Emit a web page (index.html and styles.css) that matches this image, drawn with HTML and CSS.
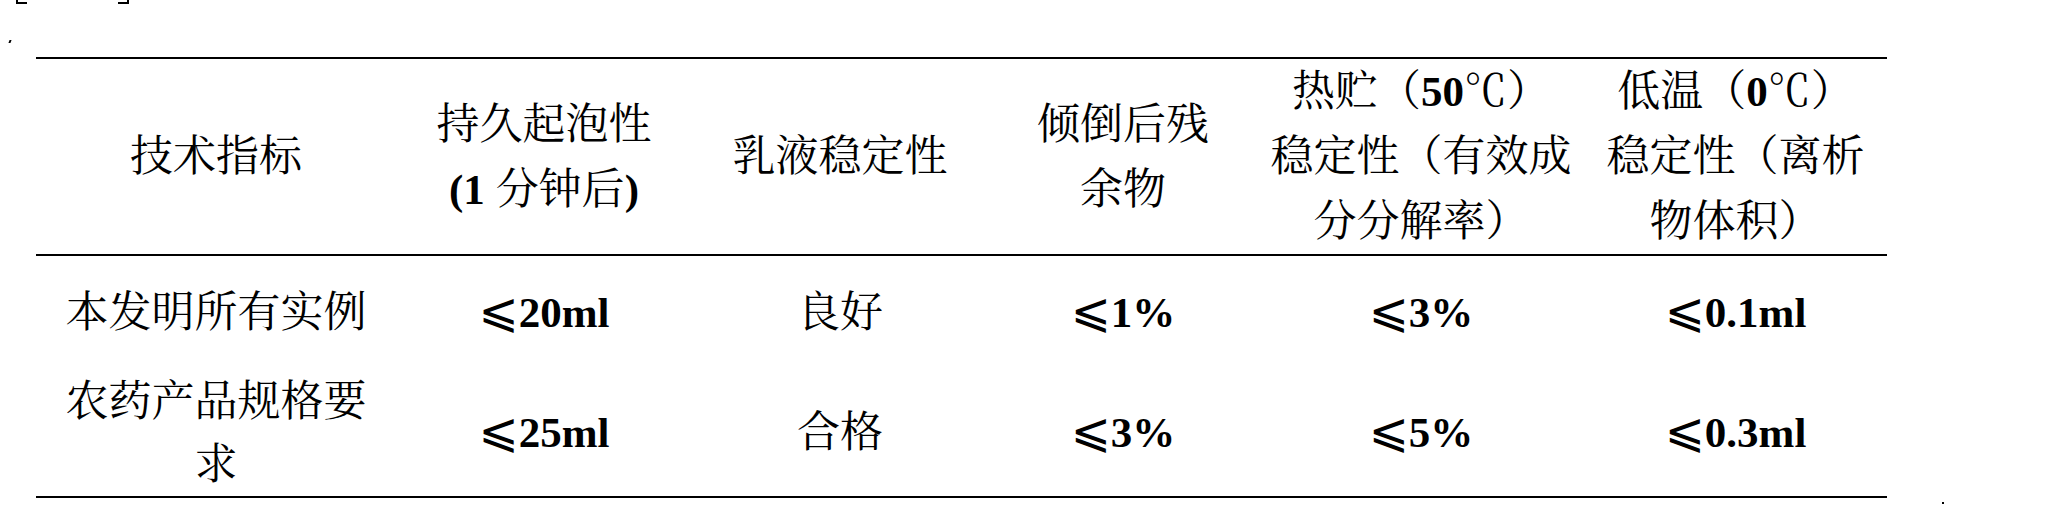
FILE: index.html
```html
<!DOCTYPE html>
<html lang="zh-CN">
<head>
<meta charset="utf-8">
<title>技术指标</title>
<link rel="stylesheet" href="styles.css">
</head>
<body>
<div class="page">
  <div class="marks">
    <span class="mark bracket-left"></span>
    <span class="mark bracket-right"></span>
    <span class="mark tick"></span>
    <span class="mark dot"></span>
  </div>
  <table class="spec">
    <colgroup>
      <col class="c1"><col class="c2"><col class="c3"><col class="c4"><col class="c5"><col class="c6">
    </colgroup>
    <thead>
      <tr class="head-row">
        <th>技术指标</th>
        <th>持久起泡性<br><b class="num">(1 </b>分钟后<b class="num">)</b></th>
        <th>乳液稳定性</th>
        <th>倾倒后残<br>余物</th>
        <th>热贮（<b class="num">50</b>℃）<br>稳定性（有效成<br>分分解率）</th>
        <th>低温（<b class="num">0</b>℃）<br>稳定性（离析<br>物体积）</th>
      </tr>
    </thead>
    <tbody>
      <tr class="row-one">
        <td>本发明所有实例</td>
        <td><span class="le">⩽</span><b class="num">20ml</b></td>
        <td>良好</td>
        <td><span class="le">⩽</span><b class="num">1%</b></td>
        <td><span class="le">⩽</span><b class="num">3%</b></td>
        <td><span class="le">⩽</span><b class="num">0.1ml</b></td>
      </tr>
      <tr class="row-two">
        <td>农药产品规格要<br>求</td>
        <td><span class="le">⩽</span><b class="num">25ml</b></td>
        <td>合格</td>
        <td><span class="le">⩽</span><b class="num">3%</b></td>
        <td><span class="le">⩽</span><b class="num">5%</b></td>
        <td><span class="le">⩽</span><b class="num">0.3ml</b></td>
      </tr>
    </tbody>
  </table>
</div>
</body>
</html>
```
FILE: styles.css
```css
html, body {
  margin: 0;
  padding: 0;
  background: #ffffff;
}

.page {
  width: 2054px;
  height: 530px;
  padding-left: 36px;
  box-sizing: border-box;
  font-family: "Liberation Serif", "Noto Serif CJK SC", "Noto Sans CJK SC", serif;
  color: #000000;
}

.marks {
  position: relative;
  height: 57px;
}

.mark {
  position: absolute;
  display: block;
  background: #000;
}

.bracket-left {
  left: -20px;
  top: 0;
  width: 11px;
  height: 4px;
  background: transparent;
  border-left: 2px solid #000;
  border-bottom: 2px solid #000;
  box-sizing: border-box;
}

.bracket-right {
  left: 82px;
  top: 0;
  width: 11px;
  height: 4px;
  background: transparent;
  border-right: 2px solid #000;
  border-bottom: 2px solid #000;
  box-sizing: border-box;
}

.tick {
  left: -27px;
  top: 40px;
  width: 2px;
  height: 3px;
  transform: skewX(-20deg);
}

.dot {
  left: 1906px;
  top: 502px;
  width: 2px;
  height: 2px;
}

.spec {
  width: 1851px;
  border-collapse: collapse;
  table-layout: fixed;
  border-top: 2px solid #000;
  border-bottom: 2px solid #000;
  font-size: 43px;
}

.c1 { width: 360px; }
.c2 { width: 296px; }
.c3 { width: 296px; }
.c4 { width: 270px; }
.c5 { width: 326px; }
.c6 { width: 303px; }

.spec th,
.spec td {
  padding: 0;
  text-align: center;
  vertical-align: middle;
  font-weight: normal;
  line-height: 65px;
  white-space: nowrap;
}

.head-row {
  height: 194px;
  border-bottom: 2px solid #000;
}

.row-one {
  height: 114px;
}

.row-two {
  height: 128px;
}

.row-two td {
  line-height: 63px;
}

.num {
  font-family: "Liberation Serif", serif;
  font-weight: bold;
}

.le {
  font-family: "DejaVu Sans", "DejaVu Serif", "Noto Sans CJK SC", serif;
  font-weight: normal;
  font-size: 48px;
  line-height: 1;
}
```
